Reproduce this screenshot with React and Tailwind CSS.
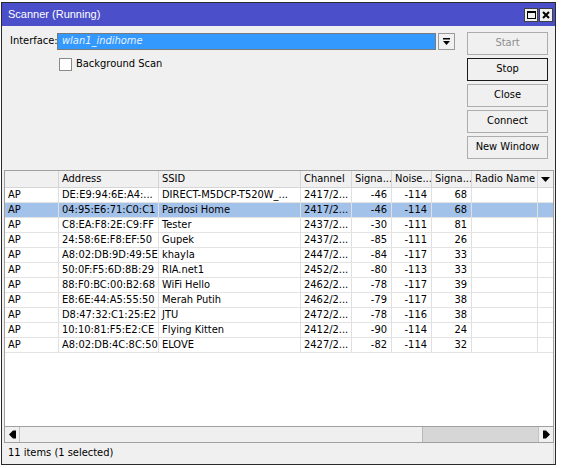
import React from "react";

const cols = [
  { w: "w-[54px]", align: "left" },
  { w: "w-[100px]", align: "left" },
  { w: "w-[142px]", align: "left" },
  { w: "w-[51px]", align: "left" },
  { w: "w-[40px]", align: "right" },
  { w: "w-[40px]", align: "right" },
  { w: "w-[40px]", align: "right" },
  { w: "w-[66px]", align: "left" },
];

const headers = ["", "Address", "SSID", "Channel", "Signa...", "Noise...", "Signa...", "Radio Name"];

const rows = [
  ["AP", "DE:E9:94:6E:A4:...", "DIRECT-M5DCP-T520W_...", "2417/2...", "-46", "-114", "68", ""],
  ["AP", "04:95:E6:71:C0:C1", "Pardosi Home", "2417/2...", "-46", "-114", "68", ""],
  ["AP", "C8:EA:F8:2E:C9:FF", "Tester", "2437/2...", "-30", "-111", "81", ""],
  ["AP", "24:58:6E:F8:EF:50", "Gupek", "2437/2...", "-85", "-111", "26", ""],
  ["AP", "A8:02:DB:9D:49:5E", "khayla", "2447/2...", "-84", "-117", "33", ""],
  ["AP", "50:0F:F5:6D:8B:29", "RIA.net1", "2452/2...", "-80", "-113", "33", ""],
  ["AP", "88:F0:BC:00:B2:68", "WiFi Hello", "2462/2...", "-78", "-117", "39", ""],
  ["AP", "E8:6E:44:A5:55:50", "Merah Putih", "2462/2...", "-79", "-117", "38", ""],
  ["AP", "D8:47:32:C1:25:E2", "JTU", "2472/2...", "-78", "-116", "38", ""],
  ["AP", "10:10:81:F5:E2:CE", "Flying Kitten", "2412/2...", "-90", "-114", "24", ""],
  ["AP", "A8:02:DB:4C:8C:50", "ELOVE", "2427/2...", "-82", "-114", "32", ""],
];

function WinButton({ children, disabled, focused }) {
  return (
    <div
      className={`h-[23px] w-[81px] flex items-center justify-center border bg-[#f0f0f0] ${
        focused ? "border-[#1a1a1a]" : "border-[#adadad]"
      } ${disabled ? "text-[#8d8d8d]" : "text-black"}`}
    >
      {children}
    </div>
  );
}

function Arrow({ dir }) {
  return (
    <svg width="7" height="9" viewBox="0 0 7 9">
      {dir === "left" ? (
        <polygon points="0,4.5 4,0.5 7,0.5 7,8.5 4,8.5" fill="#000" />
      ) : (
        <polygon points="7,4.5 3,0.5 0,0.5 0,8.5 3,8.5" fill="#000" />
      )}
    </svg>
  );
}

export default function App() {
  return (
    <div
      className="w-[561px] h-[468px] bg-white overflow-hidden pt-[2px] pl-[1px] text-[11px] text-black"
      style={{ fontFamily: '"DejaVu Sans Condensed", "Liberation Sans", sans-serif' }}
    >
      <div className="w-[555px] h-[463px] border border-[#2a2a2a] flex flex-col bg-[#f0f0f0]">
        {/* title bar */}
        <div className="h-[23px] shrink-0 bg-[#4b4fc9] flex items-center justify-between pl-[6px] pr-[2px]">
          <span className="text-white text-[11px]" style={{ fontFamily: '"Liberation Sans", Arial, sans-serif' }}>
            Scanner (Running)
          </span>
          <div className="flex items-center gap-[1px]">
            <div className="w-[14px] h-[14px] bg-[#f0f0f0] border border-[#404040] flex items-center justify-center">
              <div className="w-[9px] h-[8px] border border-black border-t-2" />
            </div>
            <div className="w-[14px] h-[14px] bg-[#f0f0f0] border border-[#404040] flex items-center justify-center">
              <svg width="8" height="8" viewBox="0 0 8 8">
                <path d="M1 1 L7 7 M7 1 L1 7" stroke="#000" strokeWidth="2" />
              </svg>
            </div>
          </div>
        </div>

        {/* top section */}
        <div className="h-[144px] shrink-0 flex">
          <div className="flex-1 pl-[8px] pt-[7px]">
            <div className="flex items-center">
              <span className="w-[47px]">Interface:</span>
              <div className="w-[379px] h-[17px] border border-[#7a7a7a] bg-[#3399ff] flex items-center pl-[4px]">
                <span className="italic text-[#e8f2ff]">wlan1_indihome</span>
              </div>
              <div className="ml-[2px] w-[17px] h-[17px] border border-[#9a9a9a] bg-[#f0f0f0] flex items-center justify-center">
                <svg width="9" height="9" viewBox="0 0 9 9">
                  <rect x="1" y="1" width="7" height="1.5" fill="#000" />
                  <polygon points="1,4 8,4 4.5,8" fill="#000" />
                </svg>
              </div>
            </div>
            <div className="flex items-center mt-[6px] pl-[49px]">
              <div className="w-[13px] h-[13px] bg-white border border-[#8a8a8a]" />
              <span className="ml-[4px]">Background Scan</span>
            </div>
          </div>
          <div className="w-[81px] mr-[7px] pt-[6px] flex flex-col gap-[3px]">
            <WinButton disabled>Start</WinButton>
            <WinButton focused>Stop</WinButton>
            <WinButton>Close</WinButton>
            <WinButton>Connect</WinButton>
            <WinButton>New Window</WinButton>
          </div>
        </div>

        {/* table */}
        <div className="ml-[2px] mr-[1px] h-[273px] shrink-0 border border-[#a0a0a0] bg-white flex flex-col">
          <div className="h-[17px] shrink-0 flex bg-[#f0f0f0] border-b border-[#d5d5d5]">
            {headers.map((h, i) => (
              <div
                key={i}
                className={`${cols[i].w} shrink-0 border-r border-[#d5d5d5] pl-[3px] flex items-center whitespace-nowrap overflow-hidden`}
              >
                {h}
              </div>
            ))}
            <div className="flex-1 flex items-center justify-center">
              <svg width="9" height="5" viewBox="0 0 9 5">
                <polygon points="0,0 9,0 4.5,5" fill="#000" />
              </svg>
            </div>
          </div>
          {rows.map((r, ri) => (
            <div
              key={ri}
              className={`h-[15px] shrink-0 flex border-b border-[#e3e3e3] ${ri === 1 ? "bg-[#a3c2ea]" : ""}`}
            >
              {r.map((c, ci) => (
                <div
                  key={ci}
                  className={`${cols[ci].w} shrink-0 border-r border-[#e0e0e0] flex items-center whitespace-nowrap overflow-hidden ${
                    cols[ci].align === "right" ? "justify-end pr-[4px]" : "pl-[3px]"
                  }`}
                >
                  {c}
                </div>
              ))}
              <div className="flex-1" />
            </div>
          ))}
          <div className="flex-1" />
          {/* horizontal scrollbar */}
          <div className="h-[16px] shrink-0 flex border-t border-[#a0a0a0] bg-[#d6d6d6]">
            <div className="w-[15px] bg-[#f0f0f0] border-r border-[#c2c2c2] flex items-center justify-center">
              <Arrow dir="left" />
            </div>
            <div className="w-[403px] bg-[#efefef] border-r border-[#b8b8b8]" />
            <div className="flex-1" />
            <div className="w-[15px] bg-[#f0f0f0] border-l border-[#c2c2c2] flex items-center justify-center">
              <Arrow dir="right" />
            </div>
          </div>
        </div>

        {/* status bar */}
        <div className="flex-1 flex items-center pl-[5px] mx-[1px] border-r border-[#d0d0d0]">
          <span>11 items (1 selected)</span>
        </div>
      </div>
    </div>
  );
}
